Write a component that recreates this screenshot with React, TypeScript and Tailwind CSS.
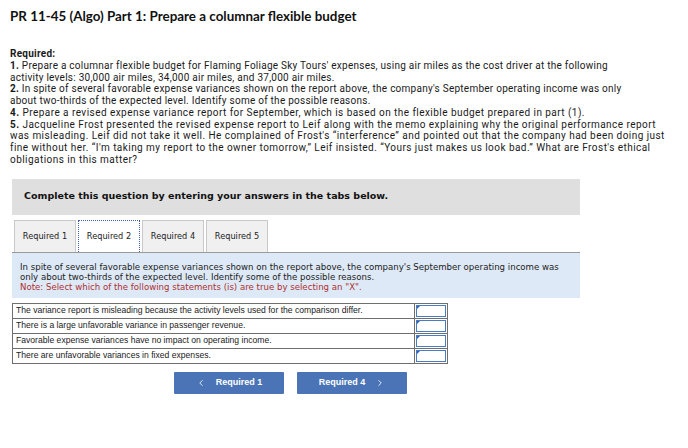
import { ChevronLeft, ChevronRight } from "lucide-react";

const tabs = ["Required 1", "Required 2", "Required 4", "Required 5"];

const statements = [
  "The variance report is misleading because the activity levels used for the comparison differ.",
  "There is a large unfavorable variance in passenger revenue.",
  "Favorable expense variances have no impact on operating income.",
  "There are unfavorable variances in fixed expenses.",
];

export default function App() {
  const active = 1;

  return (
    <div className="w-[688px] h-[448px] bg-white text-[#1a1a1a] font-['Roboto',sans-serif] overflow-hidden">
      <div className="pl-[10px] pt-[8px]">
        <h1 className="text-[13.4px] font-bold leading-[16px] text-[#111] font-['Lato',sans-serif]">
          PR 11-45 (Algo) Part 1: Prepare a columnar flexible budget
        </h1>

        {/* line breaks follow the original layout */}
        <div className="mt-[24px] text-[10px] leading-[11.75px] tracking-[0.25px] whitespace-nowrap">
          <p className="font-bold">Required:</p>
          <p>
            <b>1.</b> Prepare a columnar flexible budget for Flaming Foliage Sky Tours' expenses, using air miles as the cost driver at the following
            <br />
            activity levels: 30,000 air miles, 34,000 air miles, and 37,000 air miles.
          </p>
          <p>
            <b>2.</b> In spite of several favorable expense variances shown on the report above, the company's September operating income was only
            <br />
            about two-thirds of the expected level. Identify some of the possible reasons.
          </p>
          <div className="tracking-[0.45px]">
            <p>
              <b>4.</b> Prepare a revised expense variance report for September, which is based on the flexible budget prepared in part (1).
            </p>
            <p>
              <b>5.</b> Jacqueline Frost presented the revised expense report to Leif along with the memo explaining why the original performance report
              <br />
              was misleading. Leif did not take it well. He complained of Frost's “interference” and pointed out that the company had been doing just
              <br />
              fine without her. “I'm taking my report to the owner tomorrow,” Leif insisted. “Yours just makes us look bad.” What are Frost's ethical
              <br />
              obligations in this matter?
            </p>
          </div>
        </div>
      </div>

      <div className="ml-[12px] w-[568px] font-['DejaVu_Sans',sans-serif]">
        <div className="mt-[13px] h-[36px] bg-[#dfdfdf] flex items-center pl-[12px] text-[9.5px] font-bold text-[#111]">
          Complete this question by entering your answers in the tabs below.
        </div>

        <div className="mt-[5px] flex gap-[2px] pl-[2px] h-[32px]">
          {tabs.map((t, i) => (
            <div
              key={t}
              className={
                i === active
                  ? "w-[62px] flex items-center justify-center text-[8.2px] bg-white border border-dotted border-[#3b5ea8] border-b-0 text-[#222]"
                  : "w-[62px] flex items-center justify-center text-[8.2px] bg-[#f0f0f0] border border-[#c9c9c9] border-b-0 text-[#222]"
              }
            >
              {t}
            </div>
          ))}
        </div>

        <div className="h-[46px] bg-[#dde9f6] border-t border-[#9a9a9a] px-[8px] pt-[9px] text-[8.6px] leading-[10.3px] text-[#222]">
          <p>
            In spite of several favorable expense variances shown on the report above, the company's September operating income was only about two-thirds of the expected level. Identify some of the possible reasons.
          </p>
          <p className="text-[#b03030]">
            Note: Select which of the following statements (is) are true by selecting an "X".
          </p>
        </div>

        <table className="mt-[5px] w-[436px] border-collapse font-['Liberation_Sans',sans-serif] text-[8.6px] text-[#222]">
          <tbody>
            {statements.map((s) => (
              <tr key={s} className="h-[15px]">
                <td className="border-[1.5px] border-[#6f6f6f] px-[3px] py-0 leading-[13px]">{s}</td>
                <td className="w-[33px] border-[1.5px] border-[#6f6f6f] p-[1px]">
                  <div className="relative h-[12px] border border-[#4a7cc4] bg-white">
                    <span className="absolute left-0 top-0 w-0 h-0 border-t-[3px] border-r-[3px] border-t-[#2f63b8] border-r-transparent" />
                  </div>
                </td>
              </tr>
            ))}
          </tbody>
        </table>

        <div className="mt-[8px] ml-[162px] flex gap-[13px] font-['Liberation_Sans',sans-serif]">
          <button className="w-[110px] h-[22px] bg-[#4a74b5] text-white text-[9px] font-bold flex items-center justify-center gap-[10px] rounded-[1px]">
            <ChevronLeft size={10} strokeWidth={2} />
            <span>Required 1</span>
          </button>
          <button className="w-[110px] h-[22px] bg-[#4a74b5] text-white text-[9px] font-bold flex items-center justify-center gap-[10px] rounded-[1px]">
            <span>Required 4</span>
            <ChevronRight size={10} strokeWidth={2} />
          </button>
        </div>
      </div>
    </div>
  );
}
